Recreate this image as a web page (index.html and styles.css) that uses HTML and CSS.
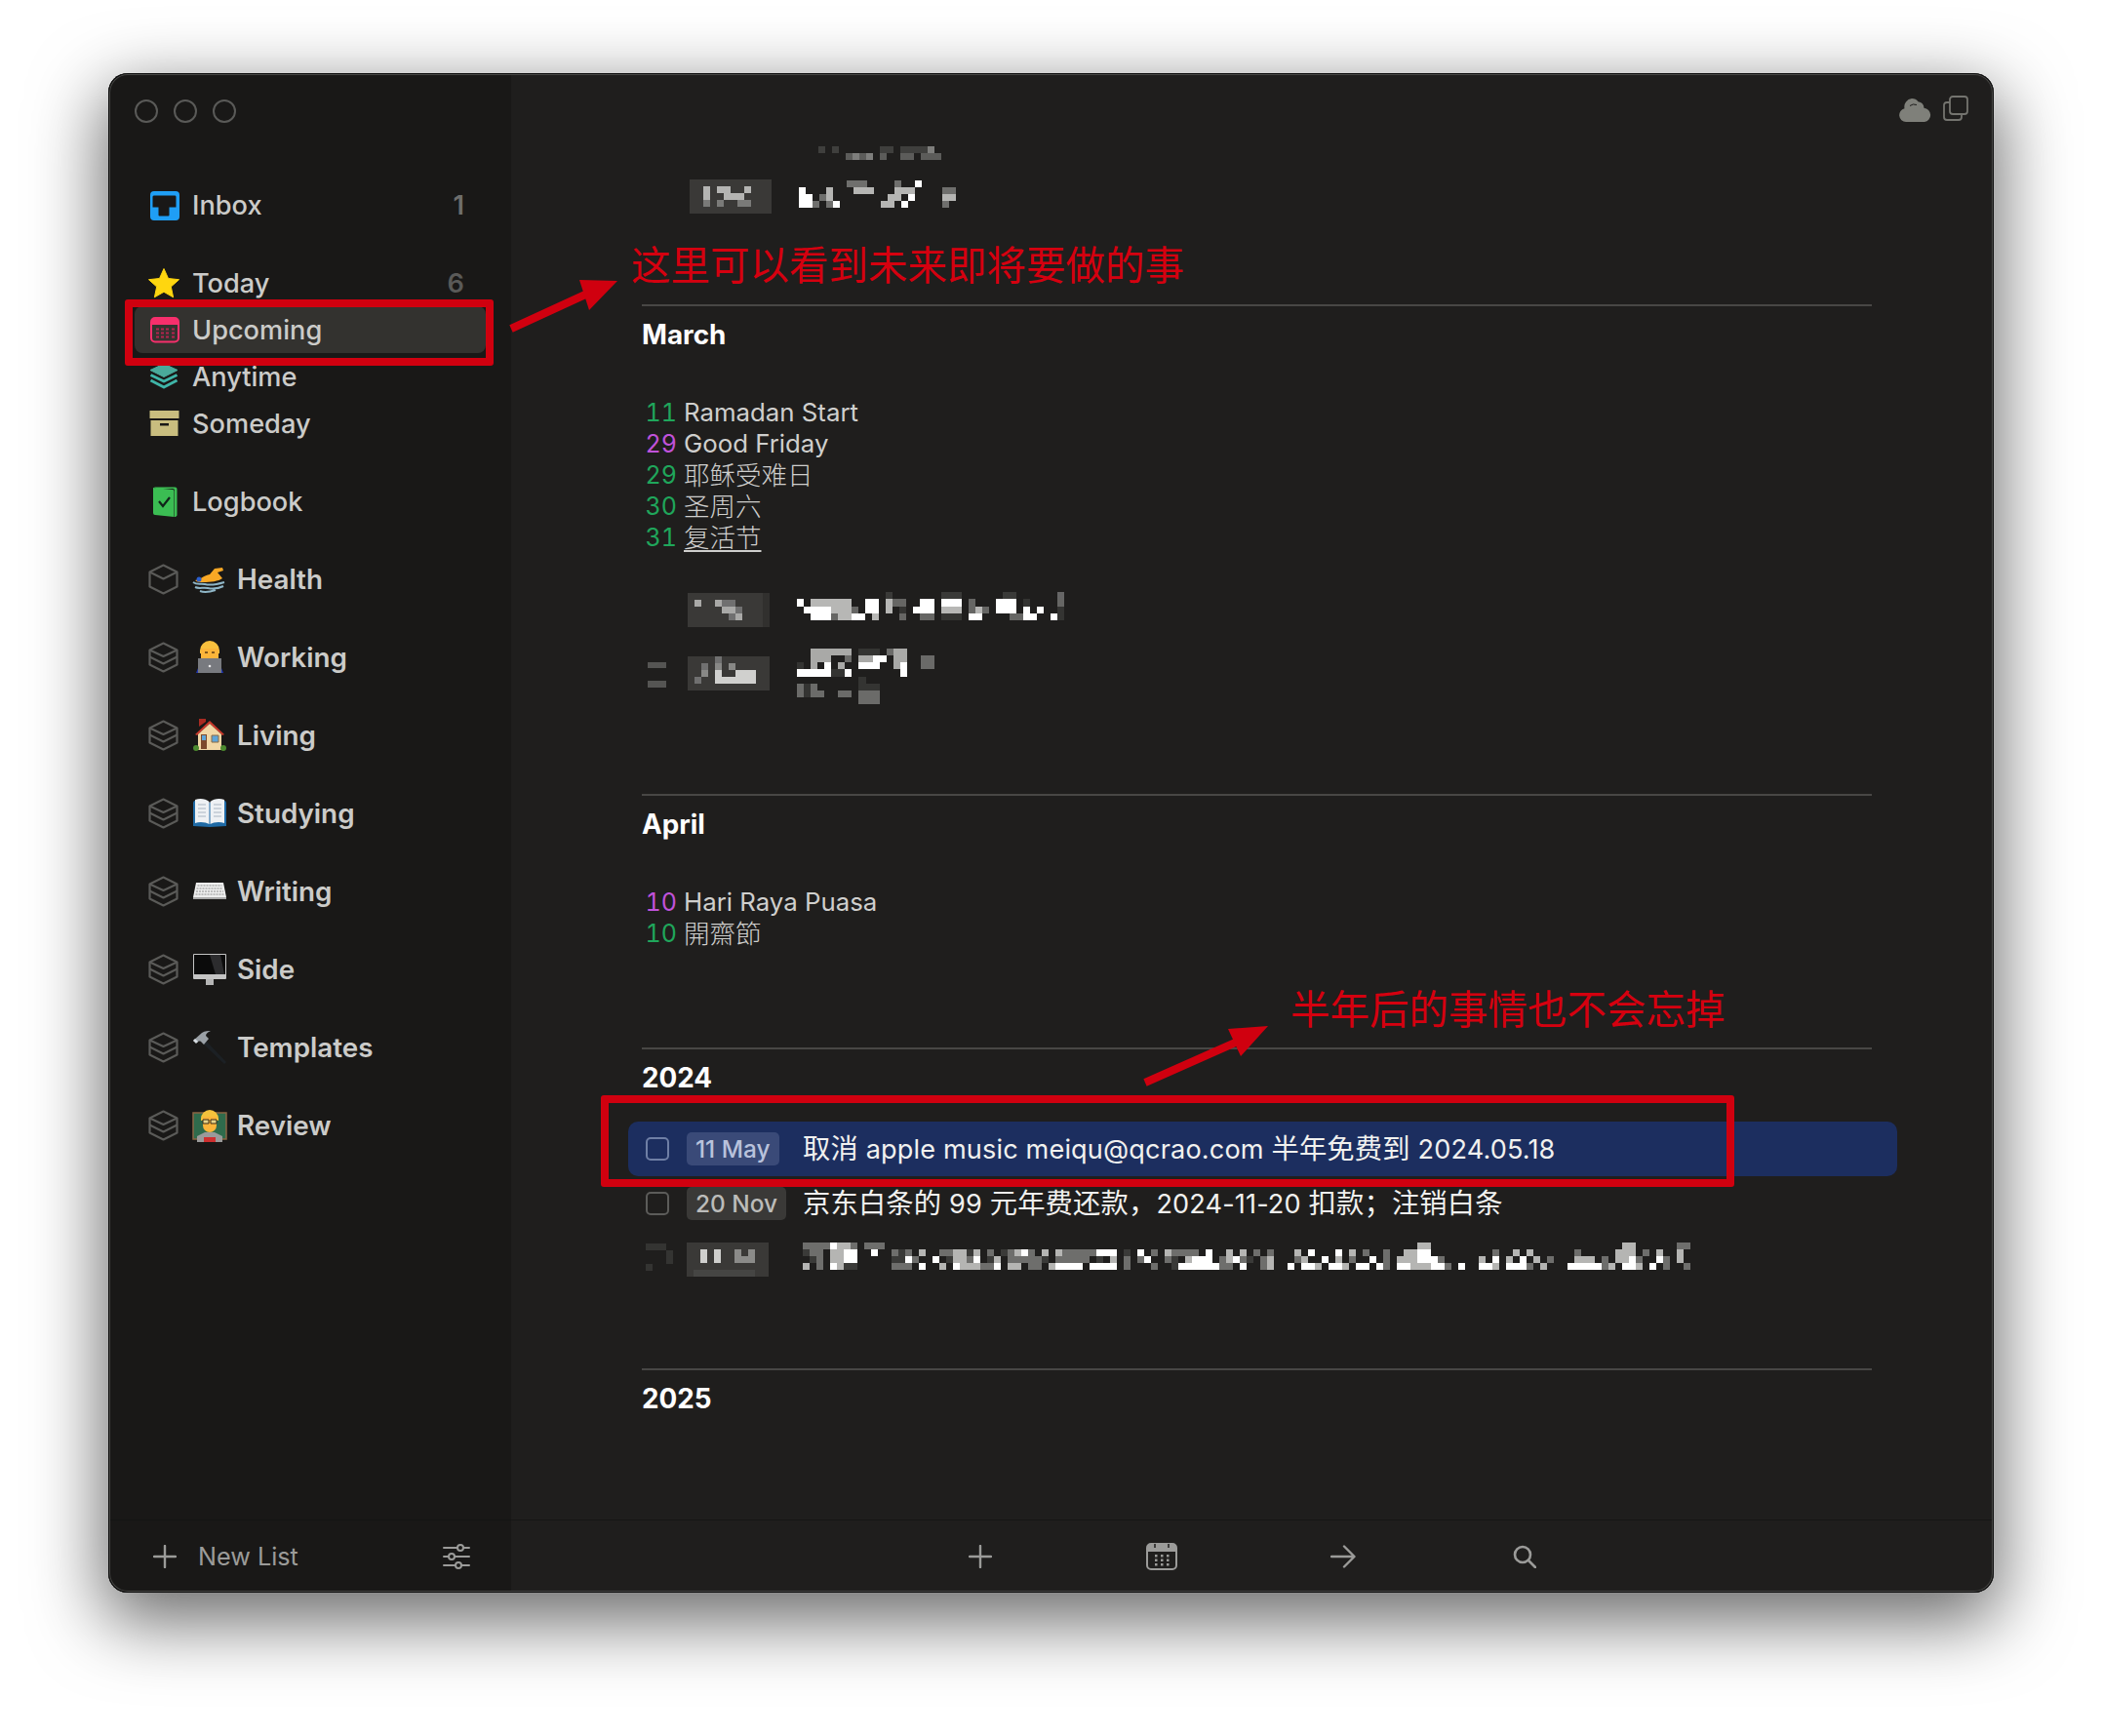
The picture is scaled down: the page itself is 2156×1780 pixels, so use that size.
FILE: index.html
```html
<!DOCTYPE html>
<html lang="zh">
<head>
<meta charset="utf-8">
<title>Upcoming</title>
<link rel="stylesheet" href="styles.css">
</head>
<body>
<div class="window">
  <aside class="sidebar">
    <div class="lights"><i class="light"></i><i class="light"></i><i class="light"></i></div>
    <nav class="nav">
      <div class="group">
        <div class="row">
          <svg class="ic" viewBox="0 0 32 32"><rect x="2" y="2" width="30" height="30" rx="4" fill="#1f9ef5"/><path d="M7 7h21a1.500 1.500 0 0 1 1 1.500v10.500h-7v8a1 1 0 0 1-1 1h-9a1 1 0 0 1-1-1v-8h-6v-10.500a1.500 1.500 0 0 1 2-1.500z" fill="#191817" transform="translate(-.5 -.5)"/></svg>
          <span class="label">Inbox</span><span class="count">1</span>
        </div>
      </div>
      <div class="group">
        <div class="row">
          <svg class="ic" viewBox="0 0 32 32"><path d="M16 1.500l4.500 10 11 1.200-8.200 7.300 2.300 10.800-9.600-5.500-9.600 5.500 2.300-10.800L.5 12.700l11-1.200z" fill="#ffd60f" stroke="#ffd60f" stroke-width="1" stroke-linejoin="round"/></svg>
          <span class="label">Today</span><span class="count dim">6</span>
        </div>
        <div class="row active">
          <svg class="ic" viewBox="0 0 32 32"><rect x="3" y="4" width="28" height="24.500" rx="4" fill="none" stroke="#f72f6c" stroke-width="2"/><path d="M3 8a4 4 0 0 1 4-4h20a4 4 0 0 1 4 4v3H3z" fill="#f72f6c"/><path d="M8 14.500h3v2H8zM13 14.500h3v2h-3zM18 14.500h3v2h-3zM24 14.500h3v2h-3zM8 18.500h3v2H8zM13 18.500h3v2h-3zM18 18.500h3v2h-3zM24 18.500h3v2h-3zM8 22.500h3v2H8zM13 22.500h3v2h-3zM18 22.500h3v2h-3zM24 22.500h3v2h-3z" fill="#b5244f"/></svg>
          <span class="label">Upcoming</span>
        </div>
        <div class="row">
          <svg class="ic" viewBox="0 0 32 32"><path d="M16 3l14 6.500-14 7-14-7z" fill="#4aa99a" stroke="#4aa99a" stroke-linejoin="round"/><path d="M2.500 14.500l13.500 6.500 13.500-6.500M2.500 20l13.500 7 13.500-7" fill="none" stroke="#3fb5a8" stroke-width="3" stroke-linejoin="round"/></svg>
          <span class="label">Anytime</span>
        </div>
        <div class="row">
          <svg class="ic" viewBox="0 0 32 32"><path d="M1.500 3h30v8h-30zM2.500 13h28v16h-28z" fill="#c9bd7f"/><path d="M12 16h9v2.500h-9z" fill="#191817"/></svg>
          <span class="label">Someday</span>
        </div>
      </div>
      <div class="group">
        <div class="row">
          <svg class="ic" viewBox="0 0 32 32"><path d="M6 1.500l2 0h19.500a2 2 0 0 1 2 2v27l-1.500 1.500-1 .5V5a2 2 0 0 0-2-2H8z" fill="#3bbd53"/><path d="M5 2l20 2a1.500 1.500 0 0 1 1.500 1.500V32L7 30a2 2 0 0 1-2-2z" fill="#3bbd53"/><path d="M11 16l4 5 7-9" fill="none" stroke="#10241a" stroke-width="2.200"/></svg>
          <span class="label">Logbook</span>
        </div>
      </div>
      <div class="group projects">
        <div class="row">
          <svg class="ic" viewBox="0 0 32 32"><use href="#cube1"/></svg>
          <svg class="emoji" viewBox="0 0 36 36"><path d="M3 19c6-1 9-5 15-6l5-6 8-1 1 3-6 2 5 6c-4 3-12 4-20 4-3 0-6 0-8-2z" fill="#f9a825"/><circle cx="7" cy="18" r="2.500" fill="#2a5fd0"/><path d="M1 21c4 3 8 1 12 2s10 1 20-2M3 26c4 2 8 0 13 1s12 0 16-2M8 30c5 2 10 1 16-1" fill="none" stroke="#8fb6c7" stroke-width="2"/></svg>
          <span class="label strong">Health</span>
        </div>
        <div class="row">
          <svg class="ic" viewBox="0 0 32 32"><use href="#cube2"/></svg>
          <svg class="emoji" viewBox="0 0 36 36"><path d="M8 11a10 10 0 0 1 20 0v3H8z" fill="#f9c03d"/><path d="M9 9h18v10a9 9 0 0 1-18 0z" fill="#fbb53a"/><path d="M13 13h3M20 13h3" stroke="#5b3a12" stroke-width="1.500"/><path d="M4 34l2-5h24l2 5z" fill="#1f35b3"/><path d="M6 19h24v15H6z" fill="#787a7f"/><circle cx="18" cy="27" r="1.300" fill="#e8e8e8"/></svg>
          <span class="label strong">Working</span>
        </div>
        <div class="row">
          <svg class="ic" viewBox="0 0 32 32"><use href="#cube2"/></svg>
          <svg class="emoji" viewBox="0 0 36 36"><path d="M7 1h7v3l-7 5z" fill="#a92b22"/><path d="M18 3L33 17l-2 1-13-12L5 18l-2-1z" fill="#c8392c"/><path d="M6 17L18 6l12 11v16H6z" fill="#f1d7a6"/><path d="M9 17h6v15H9z" fill="#7d4a2c"/><path d="M10 18h4v5h-4z" fill="#5ea4d8"/><path d="M20 18h7v7h-7z" fill="#5ea4d8" stroke="#8a6a45"/><circle cx="4" cy="31" r="3" fill="#4c8a2f"/><circle cx="32" cy="31" r="3" fill="#4c8a2f"/></svg>
          <span class="label strong">Living</span>
        </div>
        <div class="row">
          <svg class="ic" viewBox="0 0 32 32"><use href="#cube2"/></svg>
          <svg class="emoji" viewBox="0 0 36 36"><path d="M1 7l1-2 16 2 16-2 1 2v24l-17 1-17-1z" fill="#1f6aa5"/><path d="M3 4c5-2 11-1 14.500 2v23C14 27 8 26 3 28zM33 4c-5-2-11-1-14.500 2v23C22 27 28 26 33 28z" fill="#eef1f4"/><path d="M6 9h8M6 13h8M6 17h8M6 21h8M22 9h8M22 13h8M22 17h8M22 21h8" stroke="#a9b5c2" stroke-width="1"/></svg>
          <span class="label strong">Studying</span>
        </div>
        <div class="row">
          <svg class="ic" viewBox="0 0 32 32"><use href="#cube2"/></svg>
          <svg class="emoji" viewBox="0 0 36 36"><path d="M4 9h28l3 15H1z" fill="#eeeeee"/><path d="M1 24h34v2H1z" fill="#a8a8a8"/><path d="M5.500 12h25M4.500 15h27M4 18h28M3.500 21h29" stroke="#8d8d8d" stroke-width="1" stroke-dasharray="2 1"/></svg>
          <span class="label strong">Writing</span>
        </div>
        <div class="row">
          <svg class="ic" viewBox="0 0 32 32"><use href="#cube2"/></svg>
          <svg class="emoji" viewBox="0 0 36 36"><path d="M14 28h8v6h-8z" fill="#b5b5b5"/><rect x="1" y="2" width="34" height="26" rx="1" fill="#c4c4c4"/><path d="M2 3h32v20H2z" fill="#0b0b0b"/><path d="M18 3h11l4 20h-9z" fill="#2c2c2e"/></svg>
          <span class="label strong">Side</span>
        </div>
        <div class="row">
          <svg class="ic" viewBox="0 0 32 32"><use href="#cube2"/></svg>
          <svg class="emoji" viewBox="0 0 36 36"><path d="M14 11l21 22-2 2L11 14z" fill="#1c2024"/><path d="M1 11l9-8c3-2 7-2 9-2-3 1-5 3-5 5l3 3-5 6-3-3c-2-1-3 0-4 1z" fill="#9aa0a6"/><path d="M1 11l2-2 3 3-2 2z" fill="#d8dde2"/></svg>
          <span class="label strong">Templates</span>
        </div>
        <div class="row">
          <svg class="ic" viewBox="0 0 32 32"><use href="#cube2"/></svg>
          <svg class="emoji" viewBox="0 0 36 36"><path d="M1 5h34v27H1z" fill="#2f6b4c" stroke="#8a6644" stroke-width="1.500"/><path d="M9 11a9 9 0 0 1 18 0v2H9z" fill="#f4c23c"/><path d="M11 9h14v9a7 7 0 0 1-14 0z" fill="#fbb53a"/><path d="M11 12h6v4h-6zM19 12h6v4h-6z" fill="#e7d48a" stroke="#3a2a14"/><path d="M5 35v-6l8-4h10l8 4v6z" fill="#9a9a9a"/><path d="M12 30h12v5H12z" fill="#cf2f2f"/></svg>
          <span class="label strong">Review</span>
        </div>
      </div>
    </nav>
    <footer class="side-foot">
      <svg class="foot-plus" viewBox="0 0 24 24"><path d="M12 1v22M1 12h22" stroke="#9b9b99" stroke-width="2.400" stroke-linecap="round"/></svg>
      <span class="new-list">New List</span>
      <svg class="filter" viewBox="0 0 28 28"><path d="M1 5h14M21 5h6M1 14h5M12 14h15M1 23h12M19 23h8" stroke="#9b9b99" stroke-width="2" stroke-linecap="round" fill="none"/><circle cx="18" cy="5" r="3" fill="none" stroke="#9b9b99" stroke-width="2"/><circle cx="9" cy="14" r="3" fill="none" stroke="#9b9b99" stroke-width="2"/><circle cx="16" cy="23" r="3" fill="none" stroke="#9b9b99" stroke-width="2"/></svg>
    </footer>
  </aside>

  <main class="main">
    <div class="titlebar">
      <svg class="cloud" viewBox="0 0 33 25"><path d="M7 25a7 7 0 0 1-1.500-13.800A8.500 8.500 0 0 1 13 1a8 8 0 0 1 6.500 3.200 7 7 0 0 1 6 6.500A7.200 7.200 0 0 1 26 25z" fill="#7f807a"/><path d="M11 8.500a7 7 0 0 1 7-1" stroke="#1f1e1d" stroke-width="1" fill="none"/></svg>
      <svg class="copy" viewBox="0 0 26 26"><rect x="7" y="1" width="18" height="18" rx="3" fill="none" stroke="#74746f" stroke-width="1.800"/><path d="M7 7H4a3 3 0 0 0-3 3v12a3 3 0 0 0 3 3h12a3 3 0 0 0 3-3v-3" fill="none" stroke="#74746f" stroke-width="1.800"/></svg>
    </div>

    <div class="content">
      <svg class="px note-top" viewBox="0 0 18 2"><path d="M0 .5h1M2 .5h1M9 .5h2M12 .5h4" stroke="#3f3f3d"/><path d="M4 1.500h1M6 1.500h2M9 1.500h1M12 1.500h2M15 1.500h3" stroke="#5c5c5a"/><path d="M5 1.500h1M7 1.500h1M16 .5h1" stroke="#7e7e7c"/></svg>
      <div class="px-row first">
        <svg class="px badge-top" viewBox="0 0 12 5"><path d="M0 0h12v5H0z" fill="#3a3937"/><path d="M2 1.500h1M4 1.500h2M2 2.500h1M5 2.500h3M8 1.500h1" stroke="#b4b4b2"/><path d="M2 3.500h1M4 3.500h1M7 3.500h2" stroke="#7a7a78"/></svg>
        <svg class="px text-top" viewBox="0 0 23 4"><path d="M0 1.500h1M0 2.500h2M0 3.500h2M5 3.500h1M17 0.500h1M16 2.500h1M15 3.500h1" stroke="#fff"/><path d="M8 1.500h3M4 1.500h1M4 2.500h1M14 1.500h2M16 1.500h1M13 2.500h2M12 3.500h2M21 2.500h2" stroke="#b5b5b3"/><path d="M7 .5h3M14 .5h1M3 2.500h1M21 1.500h2M2 3.500h1M4 3.500h1M21 3.500h1" stroke="#6f6f6d"/></svg>
      </div>

      <section class="sec march">
        <h2 class="sec-title">March</h2>
        <ul class="events">
          <li class="ev"><span class="day green">11</span><span class="ev-name">Ramadan Start</span></li>
          <li class="ev"><span class="day purple">29</span><span class="ev-name">Good Friday</span></li>
          <li class="ev"><span class="day green">29</span><span class="ev-name zh">耶稣受难日</span></li>
          <li class="ev"><span class="day green">30</span><span class="ev-name zh">圣周六</span></li>
          <li class="ev"><span class="day green">31</span><span class="ev-name zh under">复活节</span></li>
        </ul>
        <div class="px-row r4">
          <svg class="px badge-wide" viewBox="0 0 12 5"><path d="M0 0h12v5H0z" fill="#3a3937"/><path d="M11 0h1v5h-1z" fill="#31302e"/><path d="M1 1.500h1M4 1.500h1M5 2.500h2M7 3.500h1" stroke="#a9a9a7"/><path d="M5 1.500h1M6 1.500h1M6 3.500h1M7 2.500h1" stroke="#707070"/></svg>
          <svg class="px text-r4" viewBox="0 0 39 4"><path d="M13 .5h1M21 .5h3M30 .5h2" stroke="#3a3a38"/><path d="M38 .5h1" stroke="#666"/><path d="M0 1.500h1M10 1.500h2M18 1.500h2M21 1.500h3M29 1.500h3M1 2.500h4M10 2.500h2M17 2.500h3M29 2.500h3M33 2.500h1M35 2.500h1M2 3.500h3M8 3.500h2M25 3.500h2M33 3.500h2M37 3.500h1" stroke="#fff"/><path d="M2 1.500h6M13 1.500h1M5 2.500h4M13 2.500h1M21 2.500h3M26 2.500h1M6 3.500h2M11 3.500h1" stroke="#b7b7b5"/><path d="M8 2.500h1M14 1.500h2M25 1.500h1M25 2.500h1M27 2.500h1M15 3.500h1M18 3.500h2M5 3.500h1M31 3.500h2M38 1.500h1" stroke="#666664"/><path d="M33 1.500h1M15 2.500h1M21 3.500h3M38 2.500h1M38 3.500h1" stroke="#343432"/></svg>
        </div>
        <div class="px-row r5">
          <svg class="px check-px" viewBox="0 0 3 5"><path d="M0 .5h3M0 3.500h3" stroke="#555553"/></svg>
          <svg class="px badge-wide tall" viewBox="0 0 12 5"><path d="M0 0h12v5H0z" fill="#3a3937"/><path d="M4 .5h1M2 1.500h1M1 3.500h1" stroke="#707070"/><path d="M4 2.500h1M4 3.500h3M7 2.500h3M7 3.500h3" stroke="#d0d0ce"/><path d="M4 1.500h1M6 1.500h1M2 2.500h1" stroke="#888886"/></svg>
          <div class="px-col">
            <svg class="px text-r5" viewBox="0 0 20 8"><path d="M4 2.500h1M0 3.500h5M7 3.500h1M9 2.500h3M11 1.500h2M15 2.500h1M15 3.500h1" stroke="#fff"/><path d="M2 .5h6M2 1.500h2M4 1.500h1M6 2.500h1M14 .5h2M14 1.500h2M14 2.500h1M2 2.500h1M9 1.500h2" stroke="#a9a9a7"/><path d="M13 .5h1M7 1.500h1M0 5.500h1M2 5.500h1M0 6.500h1M2 6.500h2M6 6.500h2M9 6.500h3M9 7.500h3" stroke="#6b6b69"/><path d="M9 .5h3M0 2.500h1M5 3.500h2M9 4.500h1M9 5.500h3M1 5.500h1M1 6.500h1" stroke="#343432"/><path d="M18 1h2v2h-2z" fill="#6a6a68"/></svg>
          </div>
        </div>
      </section>

      <section class="sec april">
        <h2 class="sec-title">April</h2>
        <ul class="events">
          <li class="ev"><span class="day purple">10</span><span class="ev-name">Hari Raya Puasa</span></li>
          <li class="ev"><span class="day green">10</span><span class="ev-name zh">開齋節</span></li>
        </ul>
      </section>

      <section class="sec y2024">
        <h2 class="sec-title">2024</h2>
        <div class="tasks">
          <div class="task selected">
            <i class="check"></i><span class="badge-cell"><span class="badge">11 May</span></span>
            <span class="task-text"><span class="zh">取消</span> apple music meiqu@qcrao.com <span class="zh">半年免费到</span> 2024.05.18</span>
          </div>
          <div class="task">
            <i class="check"></i><span class="badge-cell"><span class="badge">20 Nov</span></span>
            <span class="task-text"><span class="zh">京东白条的</span> 99 <span class="zh">元年费还款，</span>2024-11-20 <span class="zh">扣款；注销白条</span></span>
          </div>
          <div class="task px-task">
            <svg class="px check-dark" viewBox="0 0 4 4"><path d="M0 .5h3M3 1.500h1M0 3.500h1M3 2.500h1" stroke="#343432"/></svg>
            <svg class="px badge-bottom" viewBox="0 0 12 5"><path d="M0 0h12v5H0z" fill="#3a3937"/><path d="M2 1.500h1M4 1.500h1M2 2.500h1M4 2.500h1" stroke="#cfcfcd"/><path d="M7 1.500h1M9 1.500h1M7 2.500h3" stroke="#8b8b89"/><path d="M1 4h9v1H1z" fill="#454543"/></svg>
            <svg class="px text-bottom" viewBox="0 0 130 4">
              <path stroke="#3a3a38" d="M0 1.500h1M14 1.500h1M24 1.500h1M29 1.500h1M47 1.500h1M1 2.500h1M13 2.500h2M21 2.500h1M27 2.500h1M35 2.500h1M43 2.500h1M54 2.500h1M65 2.500h1M6 3.500h2M54 3.500h1"/>
              <path stroke="#6e6e6c" d="M0 .5h4M7 .5h1M9 .5h3M128 .5h2M1 1.500h2M13 1.500h1M15 1.500h1M20 1.500h2M27 1.500h1M30 1.500h1M33 1.500h1M38 1.500h5M51 1.500h1M54 1.500h4M66 1.500h1M68 1.500h1M82 1.500h1M85 1.500h1M101 1.500h1M113 1.500h1M123 1.500h1M2 2.500h1M16 2.500h1M24 2.500h1M30 2.500h5M37 2.500h5M47 2.500h1M49 2.500h1M53 2.500h1M61 2.500h1M64 2.500h1M67 2.500h1M72 2.500h1M80 2.500h1M85 2.500h1M93 2.500h1M109 2.500h1M117 2.500h1M122 2.500h1M126 2.500h1M2 3.500h1M13 3.500h3M26 3.500h2M33 3.500h2M47 3.500h1M51 3.500h1M61 3.500h2M67 3.500h1M85 3.500h1M94 3.500h1M106 3.500h1M117 3.500h1M126 3.500h1M129 3.500h1"/>
              <path stroke="#b5b5b3" d="M5 .5h2M120 .5h2M90 .5h2M4 1.500h2M17 1.500h1M22 1.500h2M25 1.500h1M31 1.500h1M35 1.500h1M37 1.500h1M53 1.500h1M62 1.500h1M64 1.500h1M72 1.500h1M80 1.500h1M88 1.500h2M104 1.500h1M106 1.500h1M119 1.500h3M125 1.500h1M128 1.500h1M4 2.500h2M22 2.500h2M28 2.500h1M45 2.500h1M56 2.500h1M62 2.500h1M68 2.500h1M73 2.500h1M78 2.500h1M87 2.500h3M99 2.500h1M103 2.500h1M107 2.500h1M113 2.500h3M119 2.500h2M128 2.500h1M0 3.500h1M5 3.500h1M20 3.500h1M23 3.500h3M30 3.500h2M36 3.500h1M68 3.500h1M75 3.500h1M79 3.500h1M89 3.500h3M101 3.500h1M108 3.500h1M118 3.500h1M122 3.500h1"/>
              <path stroke="#fff" d="M4 .5h1M6 1.500h2M10 1.500h1M32 1.500h1M43 1.500h3M49 1.500h1M59 1.500h1M74 1.500h1M78 1.500h1M90 1.500h2M6 2.500h2M15 2.500h1M19 2.500h1M25 2.500h1M50 2.500h1M57 2.500h3M63 2.500h1M76 2.500h1M83 2.500h1M90 2.500h3M101 2.500h1M105 2.500h1M121 2.500h1M125 2.500h1M4 3.500h1M17 3.500h1M22 3.500h1M28 3.500h1M37 3.500h4M42 3.500h4M55 3.500h6M64 3.500h1M71 3.500h1M73 3.500h2M77 3.500h2M81 3.500h2M84 3.500h1M87 3.500h2M92 3.500h2M96 3.500h1M99 3.500h2M103 3.500h3M112 3.500h5M120 3.500h2M124 3.500h1"/>
            </svg>
          </div>
        </div>
      </section>

      <section class="sec y2025">
        <h2 class="sec-title">2025</h2>
      </section>
    </div>

    <footer class="main-foot">
      <span class="tool"><svg class="t-plus" viewBox="0 0 24 24"><path d="M12 1v22M1 12h22" stroke="#9b9b99" stroke-width="2.400" stroke-linecap="round"/></svg></span>
      <span class="tool"><svg class="t-cal" viewBox="0 0 32 28"><rect x="1" y="1" width="30" height="26" rx="4" fill="none" stroke="#9b9b99" stroke-width="2"/><path d="M1 5a4 4 0 0 1 4-4h22a4 4 0 0 1 4 4v4H1z" fill="#9b9b99"/><path d="M9 1v4M23 1v4" stroke="#1f1e1d" stroke-width="1.500"/><path d="M9 12h2.500v2.500H9zM15 12h2.500v2.500H15zM21 12h2.500v2.500H21zM9 16.500h2.500V19H9zM15 16.500h2.500V19H15zM21 16.500h2.500V19H21zM9 21h2.500v2.500H9zM15 21h2.500v2.500H15zM21 21h2.500v2.500H21z" fill="#9b9b99"/></svg></span>
      <span class="tool"><svg class="t-arrow" viewBox="0 0 26 24"><path d="M1 12h23M14 1.500L24.500 12 14 22.500" fill="none" stroke="#9b9b99" stroke-width="2.400" stroke-linecap="round" stroke-linejoin="round"/></svg></span>
      <span class="tool"><svg class="t-search" viewBox="0 0 24 24"><circle cx="10" cy="10" r="8" fill="none" stroke="#9b9b99" stroke-width="2.600"/><path d="M16 16l7 7" stroke="#9b9b99" stroke-width="2.600" stroke-linecap="round"/></svg></span>
    </footer>
  </main>

  <div class="mark mark-one"></div>
  <div class="mark mark-two"></div>
  <svg class="arrows" viewBox="0 0 1933 1558">
    <path d="M413 262L500 222M1063 1035L1160 992" stroke="#d0000f" stroke-width="8" fill="none"/>
    <path d="M522 213L483 212L493 243zM1189 977L1148 980L1161 1008z" fill="#d0000f"/>
  </svg>
  <div class="note note-one">这里可以看到未来即将要做的事</div>
  <div class="note note-two">半年后的事情也不会忘掉</div>
</div>

<svg class="defs" width="0" height="0">
  <defs>
    <g id="cube1" fill="none" stroke="#5a5a58" stroke-width="2.200" stroke-linejoin="round"><path d="M15.500 1.500l14 7v15l-14 7-14-7v-15z"/><path d="M1.500 8.500l14 7 14-7"/></g>
    <g id="cube2" fill="none" stroke="#5a5a58" stroke-width="2.200" stroke-linejoin="round"><path d="M15.500 1.500l14 7v15l-14 7-14-7v-15z"/><path d="M1.500 8.500l14 6.500 14-6.500M1.500 15.500l14 7 14-7"/></g>
  </defs>
</svg>
</body>
</html>
```

FILE: styles.css
```css
* { box-sizing: border-box; }
html, body { margin: 0; padding: 0; }
body {
  width: 2156px;
  height: 1780px;
  padding: 75px 0 0 111px;
  background: #fff;
  overflow: hidden;
  font-family: Inter, "Noto Sans CJK SC", sans-serif;
}
.defs { position: absolute; }
.window {
  position: relative;
  display: flex;
  width: 1933px;
  height: 1558px;
  border-radius: 20px;
  background: #1f1e1d;
  box-shadow: 0 24px 72px 6px rgba(0, 0, 0, .58);
}
.window::after {
  content: "";
  position: absolute;
  inset: 0;
  border-radius: 20px;
  box-shadow: inset 0 0 0 1px #0a0a0a, inset 0 0 0 2px #484846;
  pointer-events: none;
}
.sidebar {
  display: flex;
  flex-direction: column;
  flex: 0 0 413px;
  background: #191817;
  border-radius: 20px 0 0 20px;
}
.lights { display: flex; gap: 16px; padding: 27px 0 0 27px; height: 111px; }
.light { width: 24px; height: 24px; border-radius: 50%; border: 2px solid #5a5a58; }
.nav { flex: 1; display: flex; flex-direction: column; gap: 32px; padding: 0 26px 0 27px; }
.group { display: flex; flex-direction: column; }
.group.projects { gap: 32px; }
.row {
  display: flex;
  align-items: center;
  height: 48px;
  padding: 0 22px 0 14px;
  border-radius: 8px;
  color: #cbcbc9;
  font-size: 27.200px;
  font-weight: 500;
}
.row.active { background: #33322f; }
.ic { width: 32px; height: 32px; margin-right: 13px; flex: none; }
.emoji { width: 36px; height: 36px; margin-right: 10px; flex: none; }
.label { flex: 1; }
.label.strong { font-size: 27.800px; font-weight: 600; }
.count { color: #6e6e6c; font-weight: 600; }
.count.dim { color: #5a5a58; }
.side-foot {
  display: flex;
  align-items: center;
  height: 75px;
  padding: 0 42px 0 46px;
  border-top: 1px solid #141413;
  border-radius: 0 0 0 20px;
}
.foot-plus { width: 24px; height: 24px; margin-right: 22px; }
.new-list { flex: 1; color: #9b9b99; font-size: 25.200px; }
.filter { width: 28px; height: 28px; }

.main { flex: 1; min-width: 0; display: flex; flex-direction: column; }
.titlebar { display: flex; justify-content: flex-end; gap: 12px; height: 75px; padding: 23px 26px 0 0; }
.cloud { width: 33px; height: 25px; margin-top: 2px; }
.copy { width: 26px; height: 26px; }
.content { flex: 1; padding: 0 125px 0 134px; }

.px { display: block; shape-rendering: crispEdges; flex: none; }
.note-top { width: 126px; height: 14px; margin-left: 181px; }
.px-row { display: flex; align-items: flex-start; }
.px-row.first { margin: 20px 0 0 48px; gap: 28px; }
.badge-top { width: 85px; height: 35px; }
.text-top { width: 161px; height: 29px; }

.sec { border-top: 2px solid #484745; }
.march { margin-top: 93px; }
.april { margin-top: 92px; }
.y2024 { margin-top: 101px; }
.y2025 { margin-top: 85px; }
.sec-title {
  margin: 13px 0 0;
  color: #fff;
  font-size: 27.800px;
  font-weight: 700;
  line-height: 32px;
}
.events { list-style: none; margin: 48px 0 0; padding: 0; }
.ev { display: flex; height: 32px; line-height: 32px; font-size: 25.800px; color: #cfcfcd; }
.day { width: 36px; margin-right: 7px; text-align: right; font-size: 25px; font-variant-numeric: tabular-nums; }
.green { color: #1fa65b; }
.purple { color: #c052da; }
.ev-name.zh { font-size: 26.500px; font-weight: 300; }
.under { text-decoration: underline; text-underline-offset: 3px; }

.r4 { margin: 40px 0 0 47px; gap: 28px; }
.badge-wide { width: 84px; height: 36px; }
.text-r4 { width: 274px; height: 29px; }
.r5 { margin: 22px 0 0 5px; gap: 21px; }
.check-px { width: 21px; height: 32px; margin-top: 14px; }
.badge-wide.tall { height: 37px; margin-top: 7px; }
.px-col { margin-left: 7px; }
.text-r5 { width: 141px; height: 57px; }

.tasks { margin: 29px -26px 0 -14px; }
.task {
  display: flex;
  align-items: center;
  height: 56px;
  padding-left: 18px;
  border-radius: 10px;
  color: #f1f1ef;
  font-size: 27.100px;
}
.task.selected { background: #1c2e5f; }
.check {
  flex: none;
  width: 24px;
  height: 24px;
  margin-right: 18px;
  border: 2px solid #5c5c5a;
  border-radius: 5px;
}
.selected .check { border-color: #6f7fa5; }
.badge-cell { flex: none; width: 119px; }
.badge {
  display: inline-block;
  height: 34px;
  padding: 0 9px;
  border-radius: 5px;
  background: #3a3937;
  color: #bcbcba;
  font-size: 24.400px;
  font-weight: 500;
  line-height: 34px;
}
.selected .badge { background: #3a4a78; color: #b9c2dc; }
.task-text { white-space: nowrap; line-height: 54px; letter-spacing: .15px; }
.zh { font-size: 28.300px; font-weight: 400; }
.px-task { align-items: flex-start; padding-top: 12px; }
.check-dark { width: 28px; height: 28px; margin-top: 1px; margin-right: 13px; }
.badge-bottom { width: 85px; height: 35px; margin-right: 35px; }
.text-bottom { width: 910px; height: 28px; }

.main-foot {
  display: flex;
  justify-content: center;
  align-items: center;
  height: 75px;
  border-top: 1px solid #161615;
}
.tool { display: flex; justify-content: center; width: 186px; }
.t-plus { width: 24px; height: 24px; }
.t-cal { width: 32px; height: 28px; }
.t-arrow { width: 26px; height: 24px; }
.t-search { width: 24px; height: 24px; }

.mark { position: absolute; border: 8px solid #d0000f; border-radius: 3px; }
.mark-one { left: 17px; top: 232px; width: 378px; height: 68px; }
.mark-two { left: 505px; top: 1048px; width: 1162px; height: 94px; }
.arrows { position: absolute; inset: 0; width: 100%; height: 100%; pointer-events: none; }
.note { position: absolute; color: #d5000f; font-size: 40.500px; line-height: 44px; white-space: nowrap; }
.note-one { left: 536px; top: 176px; }
.note-two { left: 1212px; top: 939px; }
```
